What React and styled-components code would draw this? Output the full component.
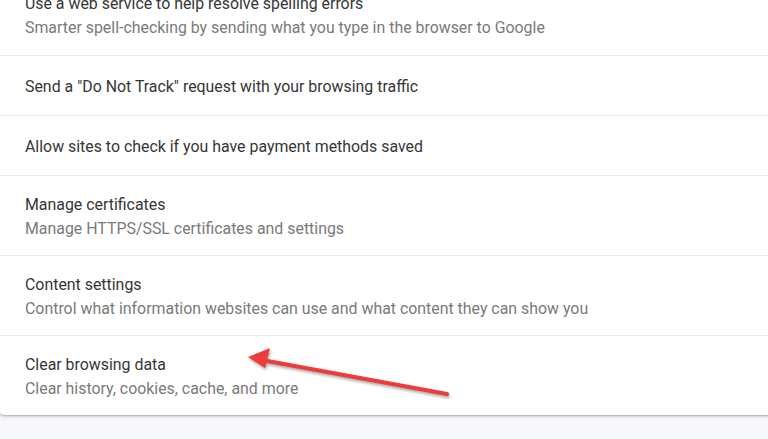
import React from 'react'
import styled, { createGlobalStyle } from 'styled-components'

const GlobalStyle = createGlobalStyle`
  html, body {
    margin: 0;
    padding: 0;
    background: #f7f8fa;
    overflow: hidden;
  }
  body {
    font-family: Roboto, 'Liberation Sans', sans-serif;
  }
`

const Page = styled.div`
  position: relative;
  width: 768px;
  height: 439px;
  overflow: hidden;
`

const Card = styled.div`
  margin-top: -25px;
  width: 790px;
  background: #fff;
  border-radius: 0 0 4px 4px;
  box-shadow: 0 1px 2px rgba(60, 64, 67, 0.35), 0 2px 4px rgba(60, 64, 67, 0.12);
`

const Row = styled.div`
  display: flex;
  flex-direction: column;
  justify-content: center;
  box-sizing: border-box;
  min-height: ${(props) => (props.sub ? '80px' : '60px')};
  padding: 2px 25px 0;
  border-top: ${(props) => (props.first ? 'none' : '1px solid #ececec')};
`

const Title = styled.div`
  font-size: 15.9px;
  line-height: 24px;
  color: #363636;
`

const Sub = styled.div`
  font-size: 15.9px;
  line-height: 24px;
  color: #7a7a7a;
`

const Arrow = styled.svg`
  position: absolute;
  left: 240px;
  top: 345px;
  filter: drop-shadow(1px 2px 1.5px rgba(0, 0, 0, 0.35));
`

const rows = [
  { title: 'Use a web service to help resolve spelling errors', sub: 'Smarter spell-checking by sending what you type in the browser to Google' },
  { title: 'Send a "Do Not Track" request with your browsing traffic' },
  { title: 'Allow sites to check if you have payment methods saved' },
  { title: 'Manage certificates', sub: 'Manage HTTPS/SSL certificates and settings' },
  { title: 'Content settings', sub: 'Control what information websites can use and what content they can show you' },
  { title: 'Clear browsing data', sub: 'Clear history, cookies, cache, and more' },
]

const App = () => {
  return (
    <Page>
      <GlobalStyle />
      <Card>
        {rows.map((r, i) => (
          <Row key={i} sub={!!r.sub} first={i === 0}>
            <Title>{r.title}</Title>
            {r.sub && <Sub>{r.sub}</Sub>}
          </Row>
        ))}
      </Card>
      <Arrow width='220' height='60' viewBox='0 0 220 60'>
        <line x1='207' y1='49' x2='22' y2='15' stroke='#ee3b3b' strokeWidth='4' strokeLinecap='round' />
        <polygon points='8,12 30,3 25,23' fill='#ee3b3b' />
      </Arrow>
    </Page>
  )
}

export default App
